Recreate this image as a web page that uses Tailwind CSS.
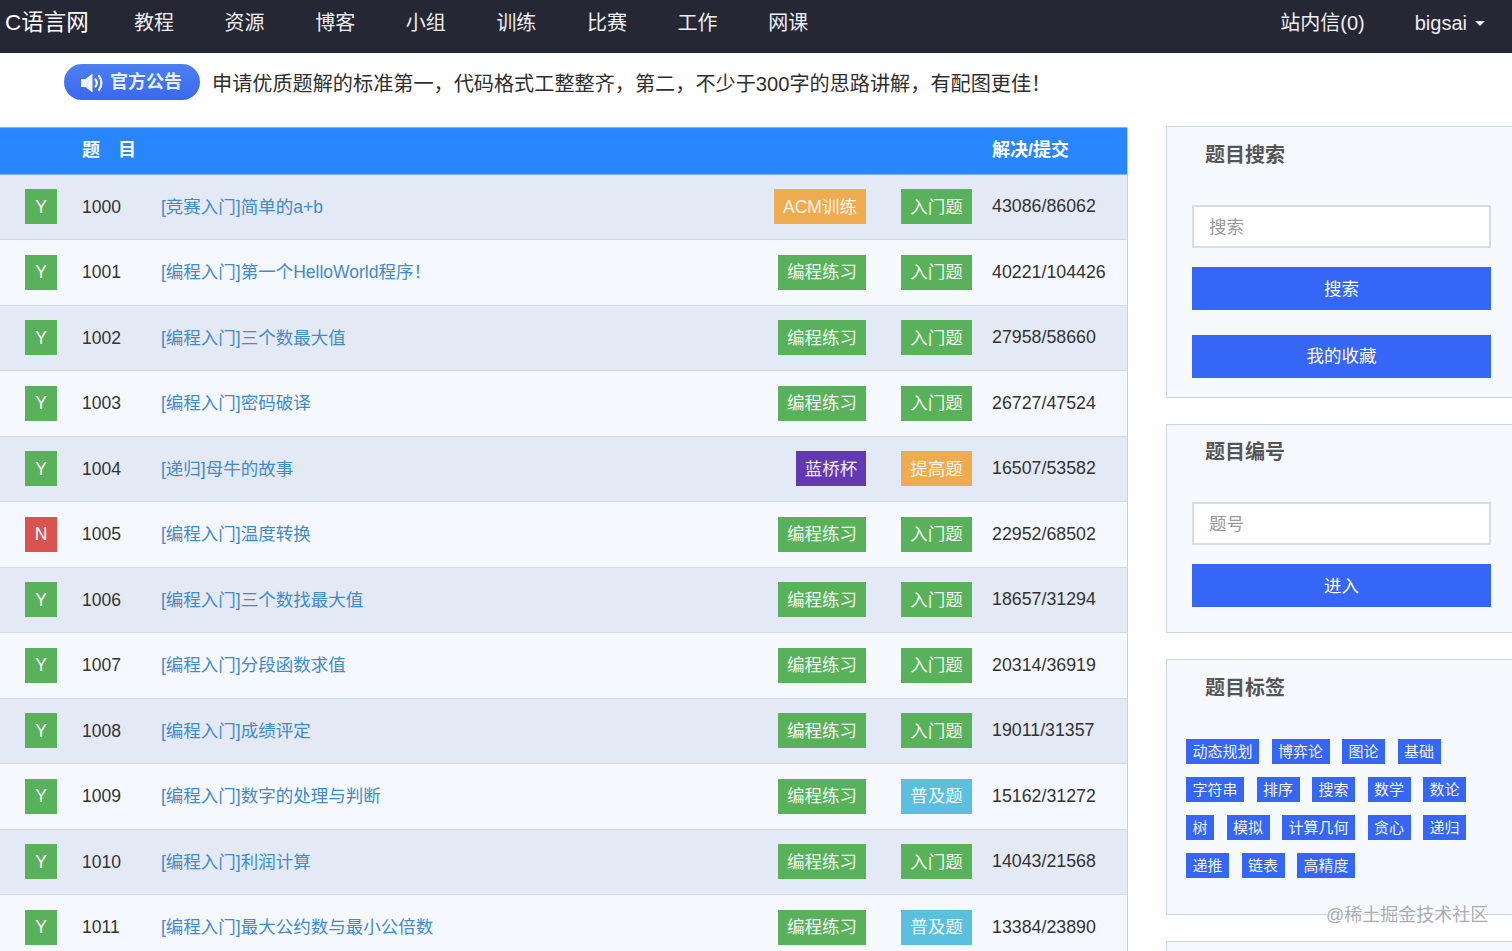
<!DOCTYPE html>
<html lang="zh-CN">
<head>
    <meta charset="UTF-8">
    <meta name="viewport" content="width=device-width, initial-scale=1.0">
    <title>C语言网</title>
    <script src="https://cdn.jsdelivr.net/npm/@tailwindcss/browser@4"></script>
</head>
<body class="relative h-[951px] overflow-hidden bg-white font-['Liberation_Sans','Noto_Sans_CJK_SC',sans-serif] text-[#333]">
    <!-- top nav -->
    <nav class="flex h-[53px] items-center bg-[#252735] pb-[8px] text-[20px] text-[#eeeeee]">
        <a class="ml-[5px] w-[129px] text-[22.500px] text-white">C语言网</a>
        <div class="flex gap-[50.6px]">
            <a>教程</a><a>资源</a><a>博客</a><a>小组</a><a>训练</a><a>比赛</a><a>工作</a><a>网课</a>
        </div>
        <div class="ml-auto flex items-center pr-[27px]">
            <a>站内信(0)</a>
            <a class="ml-[50px]">bigsai</a>
            <span class="ml-[8px] mt-[2px] h-0 w-0 border-x-[5px] border-t-[5px] border-x-transparent border-t-[#eeeeee]"></span>
        </div>
    </nav>

    <!-- notice -->
    <div class="flex h-[73px] items-start pl-[64px] pt-[11px]">
        <div class="flex h-[36px] w-[136px] items-center rounded-full bg-gradient-to-b from-[#4d80f2] to-[#3a68ec] pl-[16px] pt-[1px] text-[18px] font-bold text-[#e8effe]">
            <svg class="mr-[5px] h-[22px] w-[25px]" viewBox="0 0 25 22" fill="none">
                <path d="M1 7h4.500L12.500 1.500v19L5.500 15H1z" fill="#f2f6ff"/>
                <path d="M15.500 7.500c1.500 2 1.500 5 0 7M19 4c3.200 4 3.200 10 0 14" stroke="#f2f6ff" stroke-width="2.200" stroke-linecap="round"/>
            </svg>
            官方公告
        </div>
        <p class="ml-[12px] h-[36px] text-[20.150px] leading-[40px] text-[#2f2f2f]">申请优质题解的标准第一，代码格式工整整齐，第二，不少于300字的思路讲解，有配图更佳！</p>
    </div>

    <div class="flex items-start">
        <!-- problem list -->
        <main class="mt-[1px] w-[1128px] shrink-0 border-r border-[#c5d0e2] text-[17.5px]">
            <div class="flex h-[47.500px] items-center border-y border-[#7fb2ee] bg-[#2a86ff] text-[18px] font-bold text-white">
                <span class="ml-[82px] flex gap-[18px]"><span>题</span><span>目</span></span>
                <span class="ml-auto w-[135px]">解决/提交</span>
            </div>

            <div class="flex h-[65.500px] items-center border-b border-[#d3dae6] bg-[#e3e9f5]">
                <div class="w-[82px] pl-[25px]"><span class="flex h-[35px] w-[32px] items-center justify-center bg-[#59b25b] text-white">Y</span></div>
                <div class="w-[79px]">1000</div>
                <a class="flex-1 text-[#428bca]">[竞赛入门]简单的a+b</a>
                <span class="flex h-[35px] w-[92px] items-center justify-center bg-[#efab50] text-[#fdf5e8]">ACM训练</span>
                <div class="w-[126px] pl-[35px]"><span class="flex h-[35px] w-[71px] items-center justify-center bg-[#59b25b] text-[#eef8ee]">入门题</span></div>
                <div class="w-[135px] text-[17.800px]">43086/86062</div>
            </div>
            <div class="flex h-[65.500px] items-center border-b border-[#d3dae6] bg-[#f5f8fe]">
                <div class="w-[82px] pl-[25px]"><span class="flex h-[35px] w-[32px] items-center justify-center bg-[#59b25b] text-white">Y</span></div>
                <div class="w-[79px]">1001</div>
                <a class="flex-1 text-[#428bca]">[编程入门]第一个HelloWorld程序！</a>
                <span class="flex h-[35px] w-[88px] items-center justify-center bg-[#59b25b] text-[#eef8ee]">编程练习</span>
                <div class="w-[126px] pl-[35px]"><span class="flex h-[35px] w-[71px] items-center justify-center bg-[#59b25b] text-[#eef8ee]">入门题</span></div>
                <div class="w-[135px] text-[17.800px]">40221/104426</div>
            </div>
            <div class="flex h-[65.500px] items-center border-b border-[#d3dae6] bg-[#e3e9f5]">
                <div class="w-[82px] pl-[25px]"><span class="flex h-[35px] w-[32px] items-center justify-center bg-[#59b25b] text-white">Y</span></div>
                <div class="w-[79px]">1002</div>
                <a class="flex-1 text-[#428bca]">[编程入门]三个数最大值</a>
                <span class="flex h-[35px] w-[88px] items-center justify-center bg-[#59b25b] text-[#eef8ee]">编程练习</span>
                <div class="w-[126px] pl-[35px]"><span class="flex h-[35px] w-[71px] items-center justify-center bg-[#59b25b] text-[#eef8ee]">入门题</span></div>
                <div class="w-[135px] text-[17.800px]">27958/58660</div>
            </div>
            <div class="flex h-[65.500px] items-center border-b border-[#d3dae6] bg-[#f5f8fe]">
                <div class="w-[82px] pl-[25px]"><span class="flex h-[35px] w-[32px] items-center justify-center bg-[#59b25b] text-white">Y</span></div>
                <div class="w-[79px]">1003</div>
                <a class="flex-1 text-[#428bca]">[编程入门]密码破译</a>
                <span class="flex h-[35px] w-[88px] items-center justify-center bg-[#59b25b] text-[#eef8ee]">编程练习</span>
                <div class="w-[126px] pl-[35px]"><span class="flex h-[35px] w-[71px] items-center justify-center bg-[#59b25b] text-[#eef8ee]">入门题</span></div>
                <div class="w-[135px] text-[17.800px]">26727/47524</div>
            </div>
            <div class="flex h-[65.500px] items-center border-b border-[#d3dae6] bg-[#e3e9f5]">
                <div class="w-[82px] pl-[25px]"><span class="flex h-[35px] w-[32px] items-center justify-center bg-[#59b25b] text-white">Y</span></div>
                <div class="w-[79px]">1004</div>
                <a class="flex-1 text-[#428bca]">[递归]母牛的故事</a>
                <span class="flex h-[35px] w-[70px] items-center justify-center bg-[#6239b3] text-[#f1edf9]">蓝桥杯</span>
                <div class="w-[126px] pl-[35px]"><span class="flex h-[35px] w-[71px] items-center justify-center bg-[#efab50] text-[#fdf5e8]">提高题</span></div>
                <div class="w-[135px] text-[17.800px]">16507/53582</div>
            </div>
            <div class="flex h-[65.500px] items-center border-b border-[#d3dae6] bg-[#f5f8fe]">
                <div class="w-[82px] pl-[25px]"><span class="flex h-[35px] w-[32px] items-center justify-center bg-[#d9534f] text-white">N</span></div>
                <div class="w-[79px]">1005</div>
                <a class="flex-1 text-[#428bca]">[编程入门]温度转换</a>
                <span class="flex h-[35px] w-[88px] items-center justify-center bg-[#59b25b] text-[#eef8ee]">编程练习</span>
                <div class="w-[126px] pl-[35px]"><span class="flex h-[35px] w-[71px] items-center justify-center bg-[#59b25b] text-[#eef8ee]">入门题</span></div>
                <div class="w-[135px] text-[17.800px]">22952/68502</div>
            </div>
            <div class="flex h-[65.500px] items-center border-b border-[#d3dae6] bg-[#e3e9f5]">
                <div class="w-[82px] pl-[25px]"><span class="flex h-[35px] w-[32px] items-center justify-center bg-[#59b25b] text-white">Y</span></div>
                <div class="w-[79px]">1006</div>
                <a class="flex-1 text-[#428bca]">[编程入门]三个数找最大值</a>
                <span class="flex h-[35px] w-[88px] items-center justify-center bg-[#59b25b] text-[#eef8ee]">编程练习</span>
                <div class="w-[126px] pl-[35px]"><span class="flex h-[35px] w-[71px] items-center justify-center bg-[#59b25b] text-[#eef8ee]">入门题</span></div>
                <div class="w-[135px] text-[17.800px]">18657/31294</div>
            </div>
            <div class="flex h-[65.500px] items-center border-b border-[#d3dae6] bg-[#f5f8fe]">
                <div class="w-[82px] pl-[25px]"><span class="flex h-[35px] w-[32px] items-center justify-center bg-[#59b25b] text-white">Y</span></div>
                <div class="w-[79px]">1007</div>
                <a class="flex-1 text-[#428bca]">[编程入门]分段函数求值</a>
                <span class="flex h-[35px] w-[88px] items-center justify-center bg-[#59b25b] text-[#eef8ee]">编程练习</span>
                <div class="w-[126px] pl-[35px]"><span class="flex h-[35px] w-[71px] items-center justify-center bg-[#59b25b] text-[#eef8ee]">入门题</span></div>
                <div class="w-[135px] text-[17.800px]">20314/36919</div>
            </div>
            <div class="flex h-[65.500px] items-center border-b border-[#d3dae6] bg-[#e3e9f5]">
                <div class="w-[82px] pl-[25px]"><span class="flex h-[35px] w-[32px] items-center justify-center bg-[#59b25b] text-white">Y</span></div>
                <div class="w-[79px]">1008</div>
                <a class="flex-1 text-[#428bca]">[编程入门]成绩评定</a>
                <span class="flex h-[35px] w-[88px] items-center justify-center bg-[#59b25b] text-[#eef8ee]">编程练习</span>
                <div class="w-[126px] pl-[35px]"><span class="flex h-[35px] w-[71px] items-center justify-center bg-[#59b25b] text-[#eef8ee]">入门题</span></div>
                <div class="w-[135px] text-[17.800px]">19011/31357</div>
            </div>
            <div class="flex h-[65.500px] items-center border-b border-[#d3dae6] bg-[#f5f8fe]">
                <div class="w-[82px] pl-[25px]"><span class="flex h-[35px] w-[32px] items-center justify-center bg-[#59b25b] text-white">Y</span></div>
                <div class="w-[79px]">1009</div>
                <a class="flex-1 text-[#428bca]">[编程入门]数字的处理与判断</a>
                <span class="flex h-[35px] w-[88px] items-center justify-center bg-[#59b25b] text-[#eef8ee]">编程练习</span>
                <div class="w-[126px] pl-[35px]"><span class="flex h-[35px] w-[71px] items-center justify-center bg-[#5bc0de] text-[#eefafd]">普及题</span></div>
                <div class="w-[135px] text-[17.800px]">15162/31272</div>
            </div>
            <div class="flex h-[65.500px] items-center border-b border-[#d3dae6] bg-[#e3e9f5]">
                <div class="w-[82px] pl-[25px]"><span class="flex h-[35px] w-[32px] items-center justify-center bg-[#59b25b] text-white">Y</span></div>
                <div class="w-[79px]">1010</div>
                <a class="flex-1 text-[#428bca]">[编程入门]利润计算</a>
                <span class="flex h-[35px] w-[88px] items-center justify-center bg-[#59b25b] text-[#eef8ee]">编程练习</span>
                <div class="w-[126px] pl-[35px]"><span class="flex h-[35px] w-[71px] items-center justify-center bg-[#59b25b] text-[#eef8ee]">入门题</span></div>
                <div class="w-[135px] text-[17.800px]">14043/21568</div>
            </div>
            <div class="flex h-[65.500px] items-center border-b border-[#d3dae6] bg-[#f5f8fe]">
                <div class="w-[82px] pl-[25px]"><span class="flex h-[35px] w-[32px] items-center justify-center bg-[#59b25b] text-white">Y</span></div>
                <div class="w-[79px]">1011</div>
                <a class="flex-1 text-[#428bca]">[编程入门]最大公约数与最小公倍数</a>
                <span class="flex h-[35px] w-[88px] items-center justify-center bg-[#59b25b] text-[#eef8ee]">编程练习</span>
                <div class="w-[126px] pl-[35px]"><span class="flex h-[35px] w-[71px] items-center justify-center bg-[#5bc0de] text-[#eefafd]">普及题</span></div>
                <div class="w-[135px] text-[17.800px]">13384/23890</div>
            </div>
        </main>

        <!-- sidebar -->
        <aside class="ml-[38px] flex w-[400px] shrink-0 flex-col gap-[26px]">
            <section class="h-[272px] border border-[#c9d4e4] bg-[#f6f9fe] pl-[25px] pt-[13px]">
                <h3 class="ml-[13px] text-[20px] leading-[30px] font-bold text-[#555]">题目搜索</h3>
                <div class="mt-[35px] flex h-[43px] w-[299px] items-center border-2 border-[#d9dce1] bg-white pl-[15px] pt-[2px] text-[17.500px] text-[#999]">搜索</div>
                <button class="mt-[19px] block h-[43px] w-[299px] bg-[#3566f5] pt-[2px] text-[17.500px] text-white">搜索</button>
                <button class="mt-[25px] block h-[43px] w-[299px] bg-[#3566f5] text-[17.500px] text-white">我的收藏</button>
            </section>
            <section class="h-[209px] border border-[#c9d4e4] bg-[#f6f9fe] pl-[25px] pt-[12px]">
                <h3 class="ml-[13px] text-[20px] leading-[30px] font-bold text-[#555]">题目编号</h3>
                <div class="mt-[35px] flex h-[43px] w-[299px] items-center border-2 border-[#d9dce1] bg-white pl-[15px] pt-[2px] text-[17.500px] text-[#999]">题号</div>
                <button class="mt-[19px] block h-[43px] w-[299px] bg-[#3566f5] pt-[2px] text-[17.500px] text-white">进入</button>
            </section>
            <section class="h-[256px] border border-[#c9d4e4] bg-[#f6f9fe] pl-[19px] pt-[13px]">
                <h3 class="ml-[19px] text-[20px] leading-[30px] font-bold text-[#555]">题目标签</h3>
                <div class="mt-[36px] flex w-[300px] flex-col gap-[13px] text-[15px] leading-[25px] text-[#f0f4ff]">
                    <div class="flex gap-[12.500px]">
                        <a class="bg-[#3566f5] px-[6.500px]">动态规划</a><a class="bg-[#3566f5] px-[6.500px]">博弈论</a><a class="bg-[#3566f5] px-[6.500px]">图论</a><a class="bg-[#3566f5] px-[6.500px]">基础</a>
                    </div>
                    <div class="flex gap-[12.500px]">
                        <a class="bg-[#3566f5] px-[6.500px]">字符串</a><a class="bg-[#3566f5] px-[6.500px]">排序</a><a class="bg-[#3566f5] px-[6.500px]">搜索</a><a class="bg-[#3566f5] px-[6.500px]">数学</a><a class="bg-[#3566f5] px-[6.500px]">数论</a>
                    </div>
                    <div class="flex gap-[12.500px]">
                        <a class="bg-[#3566f5] px-[6.500px]">树</a><a class="bg-[#3566f5] px-[6.500px]">模拟</a><a class="bg-[#3566f5] px-[6.500px]">计算几何</a><a class="bg-[#3566f5] px-[6.500px]">贪心</a><a class="bg-[#3566f5] px-[6.500px]">递归</a>
                    </div>
                    <div class="flex gap-[12.500px]">
                        <a class="bg-[#3566f5] px-[6.500px]">递推</a><a class="bg-[#3566f5] px-[6.500px]">链表</a><a class="bg-[#3566f5] px-[6.500px]">高精度</a>
                    </div>
                </div>
            </section>
            <section class="h-[100px] border border-[#c9d4e4] bg-[#f6f9fe]"></section>
        </aside>
    </div>

    <!-- watermark sits over the tag card's bottom edge -->
    <div class="absolute left-[1326px] top-[903px] text-[18px] leading-[24px] text-[#a9adb3] [text-shadow:0_0_3px_#fff,0_0_3px_#fff]">@稀土掘金技术社区</div>
</body>
</html>
